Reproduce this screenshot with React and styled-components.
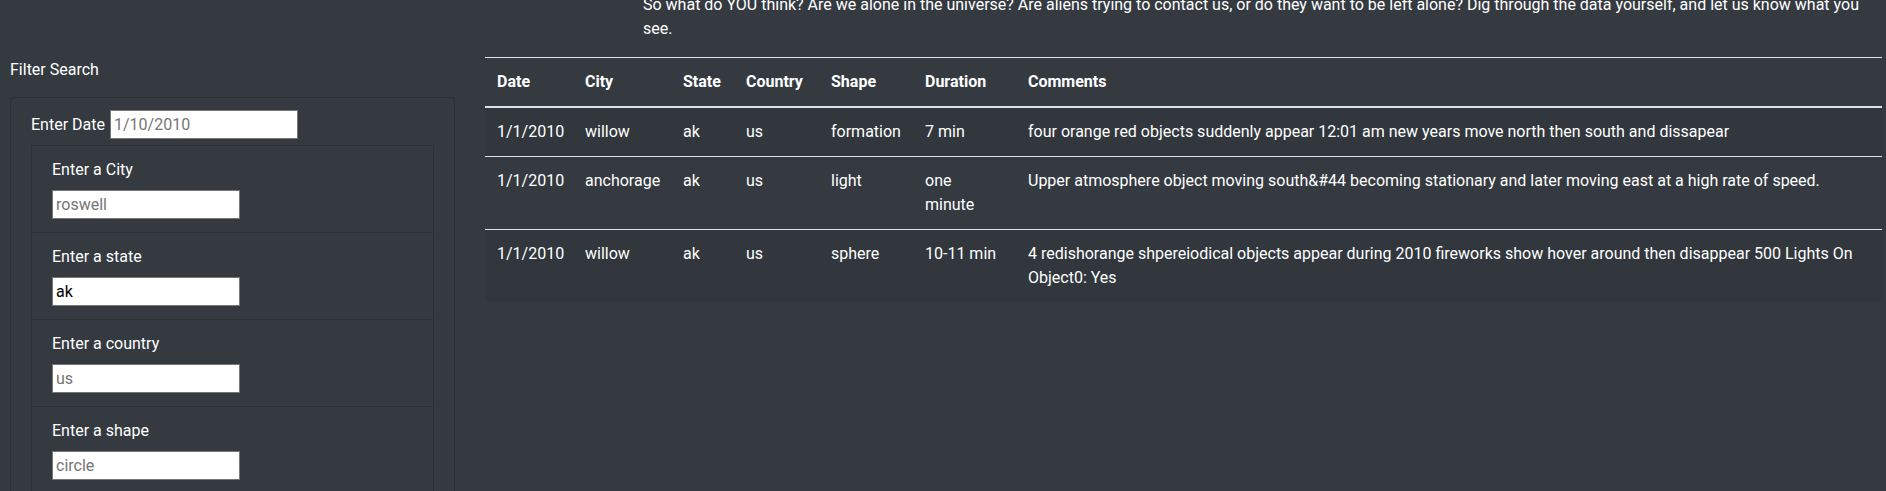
import React from "react";
import styled, { createGlobalStyle } from "styled-components";

// ============ GLOBAL ============

const GlobalStyle = createGlobalStyle`
  * { box-sizing: border-box; }
  html, body {
    margin: 0;
    padding: 0;
    background: #343a40;
    color: #ffffff;
    font-family: Roboto, "Liberation Sans", sans-serif;
    font-size: 16px;
    line-height: 24px;
  }
`;

// ============ LAYOUT ============

const Page = styled.div`
  display: flex;
  align-items: flex-start;
  padding: 0 4px 0 10px;
`;

const Sidebar = styled.aside`
  width: 445px;
  flex: none;
  margin-right: 30px;
  padding-top: 58px;
`;

const Main = styled.main`
  flex: 1;
  min-width: 0;
`;

// ============ SIDEBAR ============

const FilterTitle = styled.div`
  line-height: 24px;
  margin-bottom: 15px;
`;

const Panel = styled.div`
  border: 1px solid #2c3136;
  border-radius: 4px;
  padding: 12px 20px;
`;

const DateRow = styled.div`
  display: flex;
  align-items: center;
  gap: 5px;
  margin-bottom: 6px;
`;

const FilterList = styled.ul`
  list-style: none;
  margin: 0;
  padding: 0;
  border: 1px solid #2c3136;
`;

const FilterItem = styled.li`
  padding: 12px 20px 13px;
  & + & {
    border-top: 1px solid #2c3136;
  }
`;

const Label = styled.label`
  display: ${(p) => (p.$inline ? "inline" : "block")};
  margin-bottom: ${(p) => (p.$inline ? "0" : "8px")};
  line-height: 24px;
`;

const TextInput = styled.input`
  display: block;
  width: 188px;
  height: 29px;
  padding: 0 3px;
  border: 1px solid #767676;
  border-radius: 0;
  background: #ffffff;
  color: #000000;
  font-family: inherit;
  font-size: 16px;
  outline: none;

  &::placeholder {
    color: #757575;
  }
`;

// ============ MAIN ============

const Intro = styled.p`
  margin: -7px 8px 16px 158px;
  line-height: 24px;
`;

const Table = styled.table`
  width: 100%;
  table-layout: fixed;
  border-collapse: collapse;
`;

const HeadCell = styled.th`
  padding: 12px;
  text-align: left;
  vertical-align: bottom;
  font-weight: 700;
  border-top: 1px solid #dee2e6;
  border-bottom: 2px solid #dee2e6;
`;

const Row = styled.tr`
  &:nth-child(odd) {
    background: rgba(0, 0, 0, 0.05);
  }
`;

const Cell = styled.td`
  padding: 12px;
  vertical-align: top;
  border-top: 1px solid #dee2e6;
`;

// ============ DATA ============

const columns = [
  { label: "Date", width: 88 },
  { label: "City", width: 98 },
  { label: "State", width: 63 },
  { label: "Country", width: 85 },
  { label: "Shape", width: 94 },
  { label: "Duration", width: 103 },
  { label: "Comments" },
];

const sightings = [
  ["1/1/2010", "willow", "ak", "us", "formation", "7 min", "four orange red objects suddenly appear 12:01 am new years move north then south and dissapear"],
  ["1/1/2010", "anchorage", "ak", "us", "light", "one minute", "Upper atmosphere object moving south&#44 becoming stationary and later moving east at a high rate of speed."],
  ["1/1/2010", "willow", "ak", "us", "sphere", "10-11 min", "4 redishorange shpereiodical objects appear during 2010 fireworks show hover around then disappear 500 Lights On Object0: Yes"],
];

const filters = [
  { id: "city", label: "Enter a City", placeholder: "roswell" },
  { id: "state", label: "Enter a state", placeholder: "CA", value: "ak" },
  { id: "country", label: "Enter a country", placeholder: "us" },
  { id: "shape", label: "Enter a shape", placeholder: "circle" },
];

// ============ COMPONENT ============

const App = () => {
  return (
    <>
      <GlobalStyle />
      <Page>
        <Sidebar>
          <FilterTitle>Filter Search</FilterTitle>
          <Panel>
            <DateRow>
              <Label $inline htmlFor="datetime">Enter Date</Label>
              <TextInput id="datetime" type="text" placeholder="1/10/2010" />
            </DateRow>
            <FilterList>
              {filters.map((f) => (
                <FilterItem key={f.id}>
                  <Label htmlFor={f.id}>{f.label}</Label>
                  <TextInput
                    id={f.id}
                    type="text"
                    placeholder={f.placeholder}
                    defaultValue={f.value}
                  />
                </FilterItem>
              ))}
            </FilterList>
          </Panel>
        </Sidebar>

        <Main>
          <Intro>
            So what do YOU think? Are we alone in the universe? Are aliens trying to contact us, or do they
            want to be left alone? Dig through the data yourself, and let us know what you see.
          </Intro>
          <Table>
            <colgroup>
              {columns.map((c) => (
                <col key={c.label} style={c.width ? { width: c.width } : undefined} />
              ))}
            </colgroup>
            <thead>
              <tr>
                {columns.map((c) => (
                  <HeadCell key={c.label}>{c.label}</HeadCell>
                ))}
              </tr>
            </thead>
            <tbody>
              {sightings.map((row, i) => (
                <Row key={i}>
                  {row.map((value, j) => (
                    <Cell key={j}>{value}</Cell>
                  ))}
                </Row>
              ))}
            </tbody>
          </Table>
        </Main>
      </Page>
    </>
  );
};

export default App;
